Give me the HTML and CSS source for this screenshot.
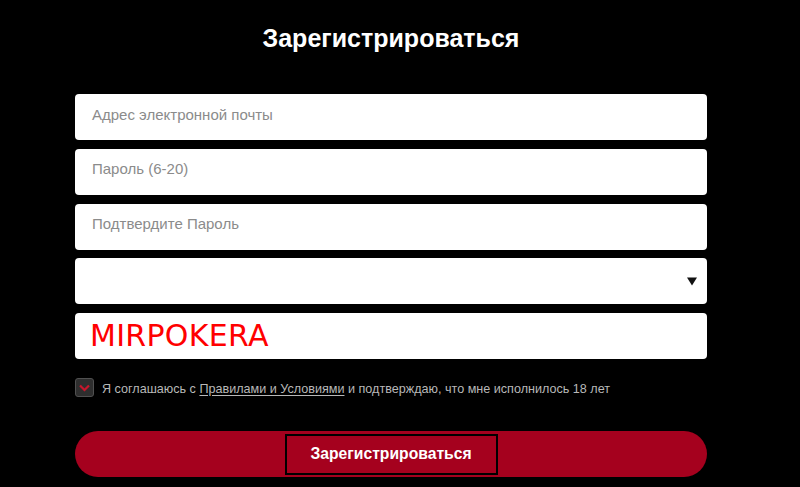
FILE: index.html
```html
<!DOCTYPE html>
<html lang="ru">
<head>
<meta charset="utf-8">
<link rel="stylesheet" href="styles.css">
</head>
<body>
<div class="form">
  <h1 class="title">Зарегистрироваться</h1>
  <div class="fields">
    <div class="field"><span class="placeholder">Адрес электронной почты</span></div>
    <div class="field"><span class="placeholder">Пароль (6-20)</span></div>
    <div class="field"><span class="placeholder">Подтвердите Пароль</span></div>
    <div class="field select">
      <svg class="arrow" width="10" height="9" viewBox="0 0 10 9"><path d="M0 0.5 L10 0.5 L5 8.5 Z" fill="#111"/></svg>
    </div>
    <div class="field promo"><span class="code">MIRPOKERA</span></div>
  </div>
  <div class="agree">
    <span class="check">
      <svg width="11" height="8" viewBox="0 0 11 8"><path d="M1 1.5 L5.5 6 L10 1.5" fill="none" stroke="#c8162c" stroke-width="2.2"/></svg>
    </span>
    <span class="agree-text">Я соглашаюсь с <u>Правилами и Условиями</u> и подтверждаю, что мне исполнилось 18 лет</span>
  </div>
  <div class="submit-bar">
    <div class="submit">Зарегистрироваться</div>
  </div>
</div>
</body>
</html>
```
FILE: styles.css
```css
html, body {
  margin: 0;
  padding: 0;
  background: #000;
}
body {
  font-family: "Liberation Sans", Arial, sans-serif;
}
.form {
  width: 632px;
  margin-left: 75px;
  display: flex;
  flex-direction: column;
}
.title {
  margin: 24px 0 0;
  font-size: 25px;
  line-height: 28px;
  font-weight: bold;
  color: #fff;
  text-align: center;
}
.fields {
  margin-top: 42px;
  display: flex;
  flex-direction: column;
  gap: 8.75px;
}
.field {
  height: 46px;
  background: #fff;
  border-radius: 4px;
  display: flex;
  align-items: center;
  padding: 0 17px;
  box-sizing: border-box;
}
.placeholder {
  color: #8b8b8b;
  font-size: 15px;
  margin-bottom: 6px;
}
.select {
  justify-content: flex-end;
  padding-right: 10px;
}
.arrow {
  display: block;
}
.promo {
  padding-left: 15px;
}
.code {
  font-family: "DejaVu Sans", Verdana, sans-serif;
  font-size: 30px;
  letter-spacing: 0.3px;
  color: #ff0000;
  line-height: 1;
}
.agree {
  margin-top: 19px;
  display: flex;
  align-items: center;
  gap: 8px;
}
.check {
  width: 19px;
  height: 19px;
  box-sizing: border-box;
  background: #2e2e2e;
  border: 1px solid #505050;
  border-radius: 3px;
  display: flex;
  align-items: center;
  justify-content: center;
}
.check svg {
  display: block;
}
.agree-text {
  color: #b8b8b8;
  font-size: 12.6px;
  margin-top: 2px;
}
.agree-text u {
  text-underline-offset: 2px;
}
.submit-bar {
  margin-top: 34px;
  height: 46px;
  background: #a5011e;
  border-radius: 23px;
  display: flex;
  align-items: center;
  justify-content: center;
}
.submit {
  width: 213px;
  height: 41px;
  box-sizing: border-box;
  border: 2px solid #000;
  display: flex;
  align-items: center;
  justify-content: center;
  color: #fff;
  font-weight: bold;
  font-size: 15.7px;
}
```
